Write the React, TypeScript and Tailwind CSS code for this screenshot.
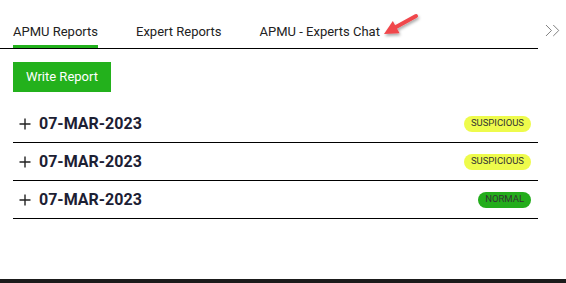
import React from 'react';
import { ChevronsRight } from 'lucide-react';

const reports = [
  { date: '07-MAR-2023', status: 'SUSPICIOUS' },
  { date: '07-MAR-2023', status: 'SUSPICIOUS' },
  { date: '07-MAR-2023', status: 'NORMAL' },
];

const tabs = ['APMU Reports', 'Expert Reports', 'APMU - Experts Chat'];

const App = () => {
  return (
    <div className="relative w-[566px] h-[283px] bg-white flex flex-col font-['Roboto',sans-serif] overflow-hidden">
      <div className="flex-1">
        <div className="flex items-center">
          <div className="w-[538px] h-[49px] flex items-end border-b border-black pl-[13px] gap-[38px]">
            {tabs.map((t, i) => (
              <div
                key={t}
                className={`pb-[5px] text-[13px] leading-[16px] text-[#222] border-b-[3px] ${
                  i === 0 ? 'border-[#22b11c]' : 'border-transparent'
                }`}
              >
                {t}
              </div>
            ))}
          </div>
          <ChevronsRight size={25} strokeWidth={0.9} className="text-[#777] ml-[2px] mt-[12px]" />
        </div>

        <div className="pl-[13px] w-[538px]">
          <button className="mt-[13px] w-[98px] h-[30px] bg-[#23b11c] text-white text-[13px]">
            Write Report
          </button>

          <div className="mt-[13px]">
            {reports.map((r, i) => (
              <div key={i} className="h-[38px] flex items-center border-b border-black pl-[6px] pr-[7px]">
                <svg width="12" height="12" viewBox="0 0 12 12" className="mr-[8px]">
                  <path d="M6 0.5V11.5M0.5 6H11.5" stroke="#222" strokeWidth="1.4" />
                </svg>
                <span className="text-[16px] font-bold text-[#1c2033]">{r.date}</span>
                <span
                  className={`ml-auto h-[16px] px-[7px] rounded-full flex items-center text-[9.5px] text-[#333] ${
                    r.status === 'NORMAL' ? 'bg-[#23ad1b]' : 'bg-[#eefb4c]'
                  }`}
                >
                  {r.status}
                </span>
              </div>
            ))}
          </div>
        </div>
      </div>
      <div className="h-[4px] bg-[#1b1b1b]" />

      {/* annotation arrow */}
      <svg className="absolute left-[378px] top-[8px]" width="48" height="36" viewBox="0 0 48 36">
        <defs>
          <filter id="sh" x="-30%" y="-30%" width="160%" height="160%">
            <feDropShadow dx="1" dy="2" stdDeviation="1.5" floodColor="#000" floodOpacity="0.35" />
          </filter>
        </defs>
        <g filter="url(#sh)">
          <line x1="38" y1="8" x2="18" y2="19" stroke="#f0464b" strokeWidth="4" strokeLinecap="round" />
          <polygon points="6,26 14.8,13 21.6,25.2" fill="#f0464b" />
        </g>
      </svg>
    </div>
  );
};

export default App;
